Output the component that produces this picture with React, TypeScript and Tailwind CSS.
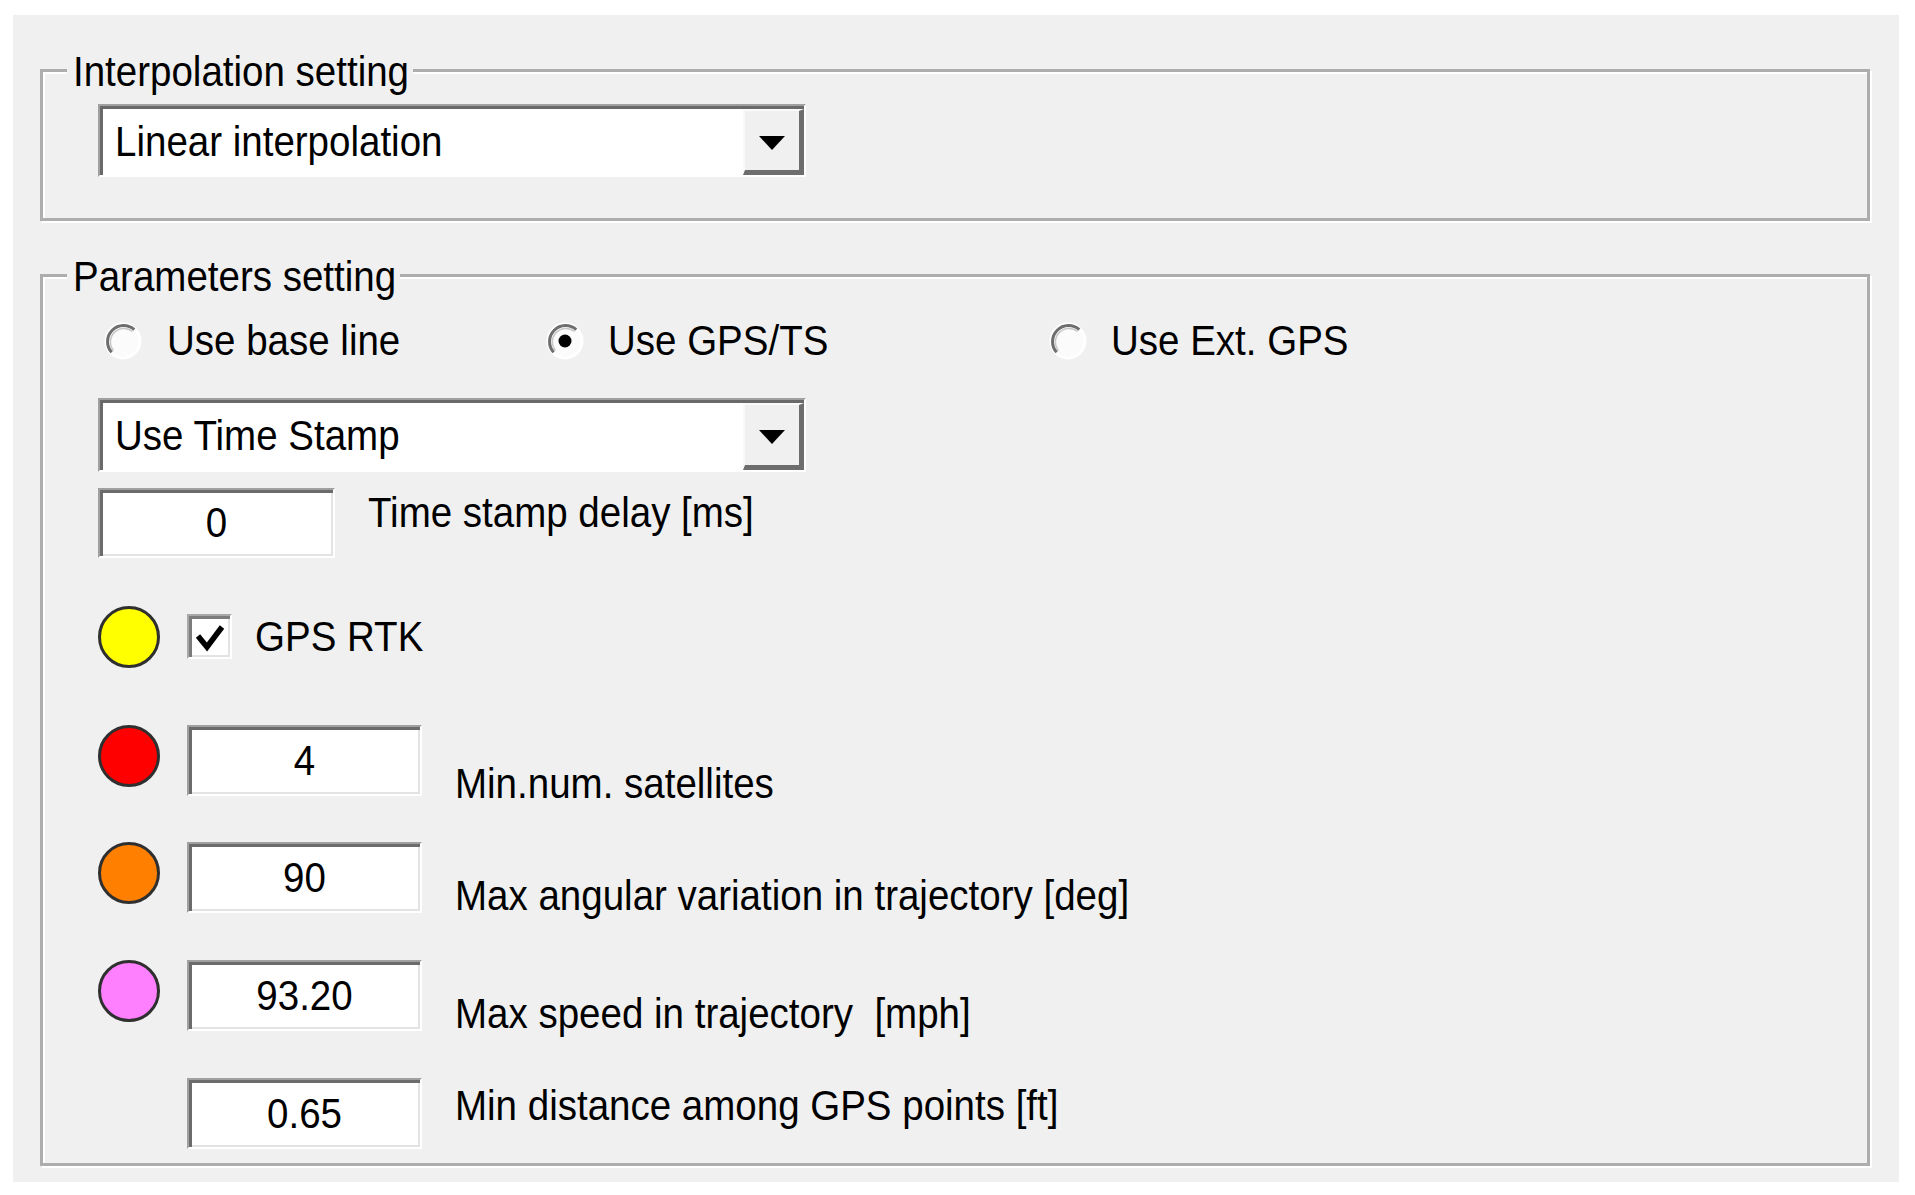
import type { ReactNode } from 'react'

// Windows-style "Interpolation / Parameters" settings dialog

function T({ children, className = '' }: { children: ReactNode; className?: string }) {
  return <span className={`inline-block whitespace-pre scale-y-[1.1] leading-[44px] text-[38.5px] text-black ${className}`}>{children}</span>
}

function GroupBox({ title, children, className = '' }: { title: string; children: ReactNode; className?: string }) {
  return (
    <fieldset className={`border-[3px] border-[#adadad] shadow-[inset_2px_2px_0_#ffffff,2px_2px_0_#ffffff] ${className}`}>
      <legend className="ml-[24px] pl-[6px] pr-[4px] h-[40px] bg-[#f0f0f0]">
        <T className="leading-[40px]">{title}</T>
      </legend>
      {children}
    </fieldset>
  )
}

function ComboBox({ value, className = '' }: { value: string; className?: string }) {
  return (
    <div className={`flex w-[708px] border-t-2 border-l-2 border-t-[#a0a0a0] border-l-[#a0a0a0] border-r-2 border-b-2 border-r-white border-b-white bg-white shadow-[inset_3px_3px_0_#696969] ${className}`}>
      <div className="flex-1 flex items-center pl-[15px] pt-[2px]">
        <T>{value}</T>
      </div>
      <div className="w-[61px] mt-[3px] flex items-center justify-center bg-[#f0f0f0] border-t-2 border-l-2 border-t-[#fafafa] border-l-[#fafafa] border-r-[5px] border-b-[5px] border-r-[#6d6d6d] border-b-[#6d6d6d]">
        <svg width="28" height="16" viewBox="0 0 28 16" className="mt-[4px]">
          <polygon points="1,1 27,1 14,15" fill="#000" />
        </svg>
      </div>
    </div>
  )
}

function TextBox({ value, className = '' }: { value: string; className?: string }) {
  return (
    <div className={`flex items-center justify-center shrink-0 bg-white border-t-2 border-l-2 border-t-[#a0a0a0] border-l-[#a0a0a0] border-r-2 border-b-2 border-r-white border-b-white shadow-[inset_3px_3px_0_#6b6b6b,inset_-2px_-2px_0_#e3e3e3] ${className}`}>
      <T>{value}</T>
    </div>
  )
}

function Radio({ checked = false }: { checked?: boolean }) {
  return (
    <svg width="40" height="40" viewBox="0 0 40 40" className="shrink-0">
      <circle cx="20" cy="20" r="17" fill="#fbfbfb" stroke="#ffffff" strokeWidth="3" />
      <path d="M 8.7 31.3 A 16 16 0 0 1 31.3 8.7" fill="none" stroke="#6e6e6e" strokeWidth="3" />
      <path d="M 10.5 29.5 A 13.5 13.5 0 0 1 29.5 10.5" fill="none" stroke="#c8c8c8" strokeWidth="1.5" />
      {checked && <circle cx="20" cy="20" r="6.5" fill="#000" />}
    </svg>
  )
}

function Dot({ color }: { color: string }) {
  return <div className={`w-[62px] h-[62px] shrink-0 rounded-full border-[3px] border-[#2f2f2f] ${color}`} />
}

function CheckBox() {
  return (
    <div className="w-[45px] h-[45px] shrink-0 bg-white border-t-2 border-l-2 border-t-[#a8a8a8] border-l-[#a8a8a8] border-r-2 border-b-2 border-r-white border-b-white shadow-[inset_3px_3px_0_#7c7c7c,inset_-2px_-2px_0_#e3e3e3]">
      <svg width="41" height="41" viewBox="0 0 41 41">
        <polyline points="9,20 18,31 33,11" fill="none" stroke="#000" strokeWidth="5.5" strokeLinejoin="miter" />
      </svg>
    </div>
  )
}

const params = [
  { color: 'bg-[#ff0000]', value: '4', label: 'Min.num. satellites', gap: 'mt-[57px]', lift: 'mt-[37px]' },
  { color: 'bg-[#ff8000]', value: '90', label: 'Max angular variation in trajectory [deg]', gap: 'mt-[46px]', lift: 'mt-[32px]' },
  { color: 'bg-[#ff80ff]', value: '93.20', label: 'Max speed in trajectory  [mph]', gap: 'mt-[47px]', lift: 'mt-[32px]' },
  { color: '', value: '0.65', label: 'Min distance among GPS points [ft]', gap: 'mt-[47px]', lift: 'mt-[6px]' },
]

export default function App() {
  return (
    <div className="w-[1915px] h-[1195px] bg-white pt-[15px] pl-[13px] font-['Liberation_Sans',Arial,sans-serif]">
      <div className="w-[1886px] h-[1167px] bg-[#f0f0f0] pl-[27px] pr-[29px] pt-[35px] overflow-hidden">
        <GroupBox title="Interpolation setting">
          <div className="pl-[55px] pt-[14px] pb-[41px]">
            <ComboBox value="Linear interpolation" className="h-[73px]" />
          </div>
        </GroupBox>

        <GroupBox title="Parameters setting" className="mt-[34px]">
          <div className="pl-[55px] pt-[24px] pb-[14px]">
            <div className="flex h-[44px] items-center">
              <div className="flex items-center gap-[24px] ml-[5px] w-[442px]">
                <Radio />
                <T>Use base line</T>
              </div>
              <div className="flex items-center gap-[23px] w-[503px]">
                <Radio checked />
                <T>Use GPS/TS</T>
              </div>
              <div className="flex items-center gap-[23px]">
                <Radio />
                <T>Use Ext. GPS</T>
              </div>
            </div>

            <ComboBox value="Use Time Stamp" className="mt-[35px] h-[74px]" />

            <div className="mt-[16px] h-[70px] flex items-start gap-[33px]">
              <TextBox value="0" className="w-[237px] h-[70px]" />
              <T className="mt-[3px]">Time stamp delay [ms]</T>
            </div>

            <div className="mt-[47px] flex items-center h-[63px]">
              <Dot color="bg-[#ffff00]" />
              <div className="ml-[27px]"><CheckBox /></div>
              <T className="ml-[23px]">GPS RTK</T>
            </div>

            {params.map((p) => (
              <div key={p.label} className={`flex items-start h-[71px] ${p.gap}`}>
                {p.color ? <Dot color={p.color} /> : <div className="w-[62px] shrink-0" />}
                <TextBox value={p.value} className="ml-[27px] w-[235px] h-[71px]" />
                <T className={`ml-[33px] ${p.lift}`}>{p.label}</T>
              </div>
            ))}
          </div>
        </GroupBox>
      </div>
    </div>
  )
}
